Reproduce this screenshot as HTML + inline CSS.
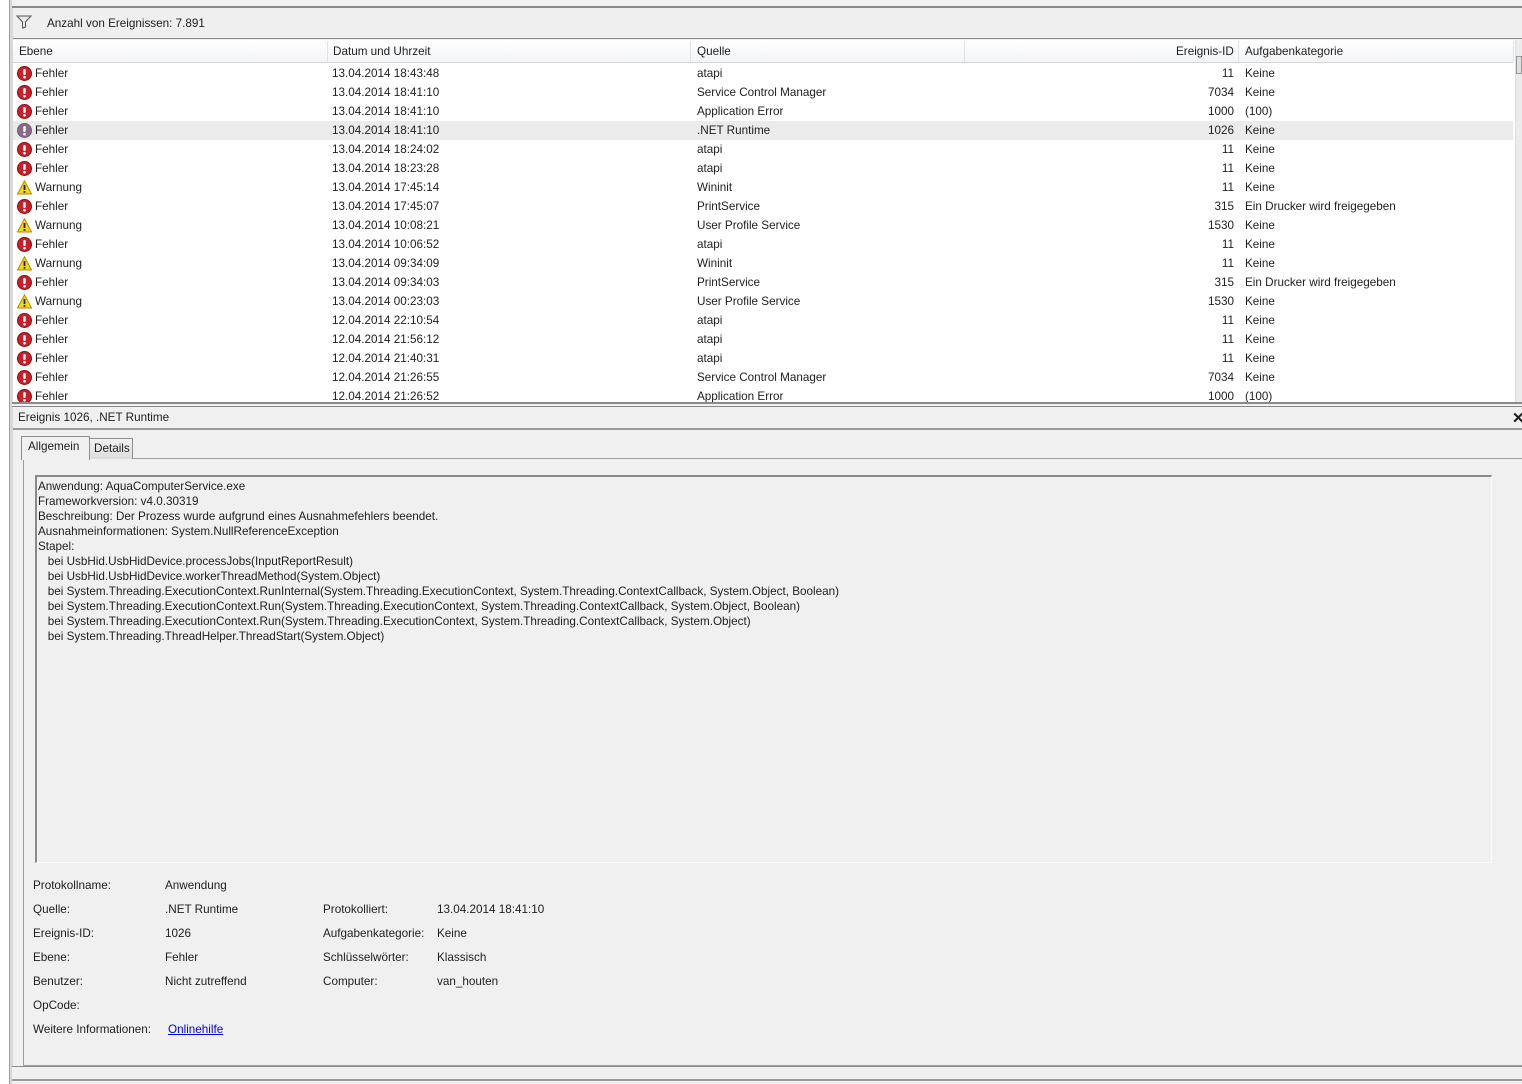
<!DOCTYPE html>
<html><head><meta charset="utf-8">
<style>
*{margin:0;padding:0;box-sizing:border-box}
body{width:1522px;height:1084px;background:#f0f0f0;font-family:"Liberation Sans",sans-serif;font-size:11.7px;color:#1e1e1e;position:relative;overflow:hidden}
.a{position:absolute;white-space:nowrap}
.row{position:absolute;left:13px;width:1500px;height:19px}
.row span{position:absolute;top:3px}
.ic{position:absolute;left:4px;top:2px;width:15px;height:15px}
</style></head><body>
<div class="a" style="left:0;top:0;width:10px;height:1084px;background:#fff;border-right:1px solid #a0a0a0"></div>
<div class="a" style="left:10px;top:0;width:3px;height:1084px;background:#d8d8d8"></div>
<div class="a" style="left:12px;top:0;width:1510px;height:8px;background:#f0f0f0;border-bottom:2px solid #8a8a8a"></div>
<div class="a" style="left:13px;top:10px;width:1509px;height:29px;background:#efefef;border-bottom:1px solid #8a8a8a"></div>
<svg class="a" style="left:16px;top:15px" width="16" height="14" viewBox="0 0 16 14"><path d="M1 1H15L9.5 7V12L6.5 13V7Z" fill="#e8e8e8" stroke="#555" stroke-width="1"/></svg>
<div class="a" style="left:47px;top:17px">Anzahl von Ereignissen: 7.891</div>
<div class="a" style="left:13px;top:40px;width:1502px;height:362px;background:#fff"></div>
<div class="a" style="left:13px;top:40px;width:1500px;height:23px;background:linear-gradient(#fff,#f3f4f6);border-bottom:1px solid #d5d5d5"></div>
<div class="a" style="left:327px;top:41px;width:1px;height:21px;background:#e2e2e2"></div>
<div class="a" style="left:690px;top:41px;width:1px;height:21px;background:#e2e2e2"></div>
<div class="a" style="left:964px;top:41px;width:1px;height:21px;background:#e2e2e2"></div>
<div class="a" style="left:1238px;top:41px;width:1px;height:21px;background:#e2e2e2"></div>
<div class="a" style="left:1513px;top:41px;width:1px;height:21px;background:#e2e2e2"></div>
<div class="a" style="left:19px;top:45px">Ebene</div>
<div class="a" style="left:333px;top:45px">Datum und Uhrzeit</div>
<div class="a" style="left:697px;top:45px">Quelle</div>
<div class="a" style="left:1176px;top:45px">Ereignis-ID</div>
<div class="a" style="left:1245px;top:45px">Aufgabenkategorie</div>
<div class="a" style="left:1515px;top:40px;width:7px;height:362px;background:#ececec;border-left:1px solid #ddd"></div>
<div class="a" style="left:1516px;top:56px;width:6px;height:18px;background:#e0e0e0;border:1px solid #999"></div>
<div class="a" style="left:13px;top:64px;width:1500px;height:338px;overflow:hidden">
<div id="rows"></div>
</div>
<div class="a" style="left:12px;top:402px;width:1510px;height:5px;background:#f0f0f0;border-top:2px solid #8a8a8a;border-bottom:1px solid #8a8a8a"></div>
<div class="a" style="left:18px;top:411px">Ereignis 1026, .NET Runtime</div>
<div class="a" style="left:1512px;top:409px;font-size:15px;font-weight:bold">✕</div>
<div class="a" style="left:13px;top:428px;width:1509px;height:2px;background:#9a9a9a"></div>
<div class="a" style="left:23px;top:458px;width:1499px;height:608px;border:1px solid #a0a0a0;border-right:none"></div>
<div class="a" style="left:89px;top:438px;width:44px;height:21px;background:linear-gradient(#f2f2f2,#dcdcdc);border:1px solid #8e8f8f;border-bottom:none"></div>
<div class="a" style="left:94px;top:442px">Details</div>
<div class="a" style="left:21px;top:436px;width:69px;height:24px;background:#f0f0f0;border:1px solid #8e8f8f;border-bottom:none"></div>
<div class="a" style="left:28px;top:440px">Allgemein</div>
<div class="a" style="left:35px;top:475px;width:1457px;height:388px;border-top:2px solid #8a8a8a;border-left:2px solid #8a8a8a;border-right:1px solid #fafafa;border-bottom:1px solid #fafafa"></div>
<div class="a" style="left:38px;top:479px;line-height:15px">Anwendung: AquaComputerService.exe<br>Frameworkversion: v4.0.30319<br>Beschreibung: Der Prozess wurde aufgrund eines Ausnahmefehlers beendet.<br>Ausnahmeinformationen: System.NullReferenceException<br>Stapel:<br>&nbsp;&nbsp;&nbsp;bei UsbHid.UsbHidDevice.processJobs(InputReportResult)<br>&nbsp;&nbsp;&nbsp;bei UsbHid.UsbHidDevice.workerThreadMethod(System.Object)<br>&nbsp;&nbsp;&nbsp;bei System.Threading.ExecutionContext.RunInternal(System.Threading.ExecutionContext, System.Threading.ContextCallback, System.Object, Boolean)<br>&nbsp;&nbsp;&nbsp;bei System.Threading.ExecutionContext.Run(System.Threading.ExecutionContext, System.Threading.ContextCallback, System.Object, Boolean)<br>&nbsp;&nbsp;&nbsp;bei System.Threading.ExecutionContext.Run(System.Threading.ExecutionContext, System.Threading.ContextCallback, System.Object)<br>&nbsp;&nbsp;&nbsp;bei System.Threading.ThreadHelper.ThreadStart(System.Object)</div>
<div class="a" style="left:33px;top:879px">Protokollname:</div><div class="a" style="left:165px;top:879px">Anwendung</div>
<div class="a" style="left:33px;top:903px">Quelle:</div><div class="a" style="left:165px;top:903px">.NET Runtime</div>
<div class="a" style="left:323px;top:903px">Protokolliert:</div><div class="a" style="left:437px;top:903px">13.04.2014 18:41:10</div>
<div class="a" style="left:33px;top:927px">Ereignis-ID:</div><div class="a" style="left:165px;top:927px">1026</div>
<div class="a" style="left:323px;top:927px">Aufgabenkategorie:</div><div class="a" style="left:437px;top:927px">Keine</div>
<div class="a" style="left:33px;top:951px">Ebene:</div><div class="a" style="left:165px;top:951px">Fehler</div>
<div class="a" style="left:323px;top:951px">Schlüsselwörter:</div><div class="a" style="left:437px;top:951px">Klassisch</div>
<div class="a" style="left:33px;top:975px">Benutzer:</div><div class="a" style="left:165px;top:975px">Nicht zutreffend</div>
<div class="a" style="left:323px;top:975px">Computer:</div><div class="a" style="left:437px;top:975px">van_houten</div>
<div class="a" style="left:33px;top:999px">OpCode:</div>
<div class="a" style="left:33px;top:1023px">Weitere Informationen:</div><div class="a" style="left:168px;top:1023px;color:#0000ee;text-decoration:underline">Onlinehilfe</div>
<div class="a" style="left:12px;top:1066px;width:1510px;height:18px;background:#f0f0f0;border-top:1px solid #8a8a8a"></div>
<div class="a" style="left:12px;top:1079px;width:1510px;height:2px;background:#9a9a9a"></div>
<script>
var d=[
["F","13.04.2014 18:43:48","atapi","11","Keine"],
["F","13.04.2014 18:41:10","Service Control Manager","7034","Keine"],
["F","13.04.2014 18:41:10","Application Error","1000","(100)"],
["S","13.04.2014 18:41:10",".NET Runtime","1026","Keine"],
["F","13.04.2014 18:24:02","atapi","11","Keine"],
["F","13.04.2014 18:23:28","atapi","11","Keine"],
["W","13.04.2014 17:45:14","Wininit","11","Keine"],
["F","13.04.2014 17:45:07","PrintService","315","Ein Drucker wird freigegeben"],
["W","13.04.2014 10:08:21","User Profile Service","1530","Keine"],
["F","13.04.2014 10:06:52","atapi","11","Keine"],
["W","13.04.2014 09:34:09","Wininit","11","Keine"],
["F","13.04.2014 09:34:03","PrintService","315","Ein Drucker wird freigegeben"],
["W","13.04.2014 00:23:03","User Profile Service","1530","Keine"],
["F","12.04.2014 22:10:54","atapi","11","Keine"],
["F","12.04.2014 21:56:12","atapi","11","Keine"],
["F","12.04.2014 21:40:31","atapi","11","Keine"],
["F","12.04.2014 21:26:55","Service Control Manager","7034","Keine"],
["F","12.04.2014 21:26:52","Application Error","1000","(100)"]];
var h="";
d.forEach(function(r,i){
var t=i*19;
var err='<svg class="ic" viewBox="0 0 15 15"><circle cx="7.5" cy="7.5" r="7" fill="'+(r[0]=="S"?"#8a6a88":"#c8202a")+'" stroke="'+(r[0]=="S"?"#6a5a78":"#8a1010")+'"/><rect x="6.3" y="3" width="2.4" height="6" rx="1" fill="#fff"/><circle cx="7.5" cy="11.2" r="1.3" fill="#fff"/></svg>';
var warn='<svg class="ic" viewBox="0 0 15 15"><path d="M7.5 0.8L14.5 14H0.5Z" fill="#f4d61a" stroke="#b08a00"/><rect x="6.6" y="5" width="1.8" height="5" fill="#222"/><rect x="6.6" y="11" width="1.8" height="1.8" fill="#222"/></svg>';
h+='<div class="row" style="left:0;top:'+t+'px;'+(r[0]=="S"?'background:#ebebeb':'')+'">'+(r[0]=="W"?warn:err)+
'<span style="left:22px">'+(r[0]=="W"?"Warnung":"Fehler")+'</span><span style="left:319px">'+r[1]+'</span><span style="left:684px">'+r[2]+'</span><span style="right:279px">'+r[3]+'</span><span style="left:1232px">'+r[4]+'</span></div>';
});
document.getElementById("rows").innerHTML=h;
</script>
</body></html>
